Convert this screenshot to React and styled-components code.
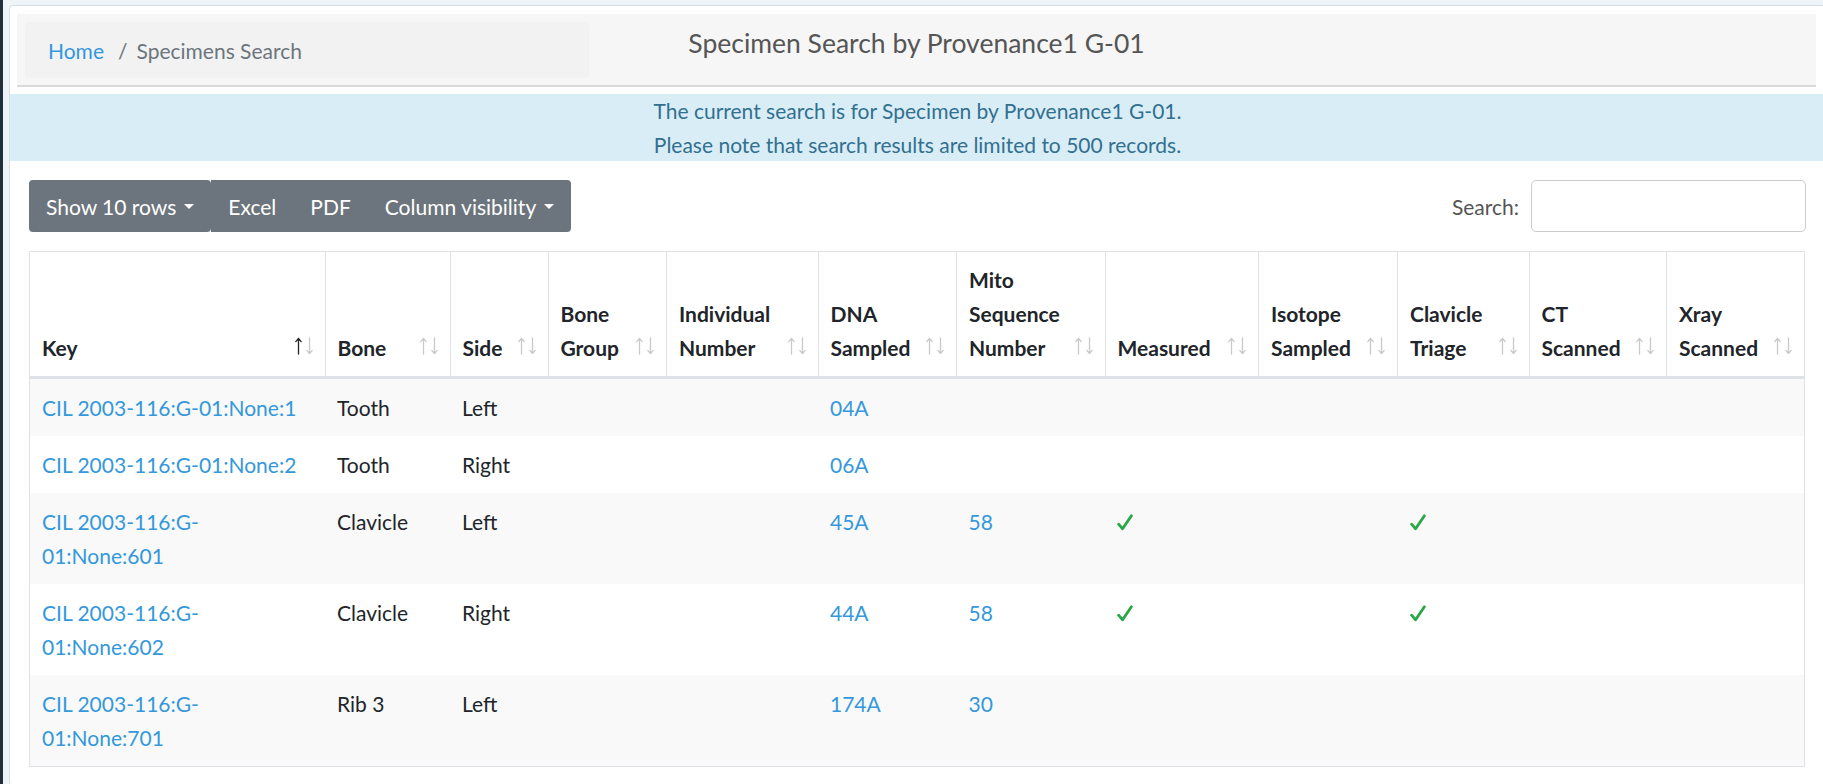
import React from 'react'
import styled, { createGlobalStyle } from 'styled-components'

const GlobalStyle = createGlobalStyle`
    html, body {
        margin: 0;
        padding: 0;
    }
    body {
        background: #eef4f8;
        font-family: Lato, 'Open Sans', sans-serif;
        font-size: 21px;
        color: #212529;
        overflow: hidden;
    }
`;

const columns = [
    { label: 'Key', width: 295.5, active: true },
    { label: 'Bone', width: 125 },
    { label: 'Side', width: 98 },
    { label: 'Bone Group', width: 118.5 },
    { label: 'Individual Number', width: 151.5 },
    { label: 'DNA Sampled', width: 138.5 },
    { label: 'Mito Sequence Number', width: 148.5 },
    { label: 'Measured', width: 153.5 },
    { label: 'Isotope Sampled', width: 139 },
    { label: 'Clavicle Triage', width: 131.5 },
    { label: 'CT Scanned', width: 137.5 },
    { label: 'Xray Scanned', width: 138 },
]

const rows = [
    { key: 'CIL 2003-116:G-01:None:1', bone: 'Tooth', side: 'Left', dna: '04A' },
    { key: 'CIL 2003-116:G-01:None:2', bone: 'Tooth', side: 'Right', dna: '06A' },
    { key: 'CIL 2003-116:G-01:None:601', bone: 'Clavicle', side: 'Left', dna: '45A', mito: '58', measured: true, clavicle: true },
    { key: 'CIL 2003-116:G-01:None:602', bone: 'Clavicle', side: 'Right', dna: '44A', mito: '58', measured: true, clavicle: true },
    { key: 'CIL 2003-116:G-01:None:701', bone: 'Rib 3', side: 'Left', dna: '174A', mito: '30' },
]

const SortIcon = ({ active }) => (
    <SortSvg width="18" height="18" viewBox="0 0 18 18">
        <g fill="none" strokeWidth="1.3" strokeLinecap="round" strokeLinejoin="round">
            <path d="M3.5 1.5V17M0.8 4.6L3.5 1.5L6.2 4.6" stroke={active ? '#222' : '#c9c9c9'} />
            <path d="M14.5 1V16.5M11.8 13.4L14.5 16.5L17.2 13.4" stroke="#c9c9c9" />
        </g>
    </SortSvg>
)

const Check = () => (
    <CheckSvg width="16" height="17" viewBox="0 0 16 17">
        <path d="M1.6 10.2L5.6 14.8L14.4 1.8" fill="none" stroke="#28a745" strokeWidth="2.8" strokeLinecap="round" strokeLinejoin="round" />
    </CheckSvg>
)

const App = () => {
    return (
        <>
            <GlobalStyle />
            <Shell>
                <SideEdge />
                <Main>
                    <Card>
                        <PageHeader>
                            <Breadcrumb>
                                <Crumb href="#">Home</Crumb>
                                <CrumbSep>/</CrumbSep>
                                <CrumbCurrent>Specimens Search</CrumbCurrent>
                            </Breadcrumb>
                            <Title>Specimen Search by Provenance1 G-01</Title>
                        </PageHeader>

                        <InfoAlert>
                            The current search is for Specimen by Provenance1 G-01.<br />
                            Please note that search results are limited to 500 records.
                        </InfoAlert>

                        <Content>
                            <Toolbar>
                                <ButtonGroup>
                                    <ToolButton $radius="4px">Show 10 rows <Caret /></ToolButton>
                                    <ToolButton $radius="0">Excel</ToolButton>
                                    <ToolButton $radius="0">PDF</ToolButton>
                                    <ToolButton $radius="0 4px 4px 0">Column visibility <Caret /></ToolButton>
                                </ButtonGroup>
                                <SearchLabel>
                                    Search:
                                    <SearchInput type="search" />
                                </SearchLabel>
                            </Toolbar>

                            <Table>
                                <colgroup>
                                    {columns.map((c) => <col key={c.label} style={{ width: c.width }} />)}
                                </colgroup>
                                <thead>
                                    <tr>
                                        {columns.map((c) => (
                                            <Th key={c.label}>
                                                <HeadInner>
                                                    <HeadLabel>{c.label}</HeadLabel>
                                                    <SortIcon active={c.active} />
                                                </HeadInner>
                                            </Th>
                                        ))}
                                    </tr>
                                </thead>
                                <tbody>
                                    {rows.map((r) => (
                                        <tr key={r.key}>
                                            <Td><CellLink href="#">{r.key}</CellLink></Td>
                                            <Td>{r.bone}</Td>
                                            <Td>{r.side}</Td>
                                            <Td></Td>
                                            <Td></Td>
                                            <Td><CellLink href="#">{r.dna}</CellLink></Td>
                                            <Td>{r.mito && <CellLink href="#">{r.mito}</CellLink>}</Td>
                                            <Td>{r.measured && <Check />}</Td>
                                            <Td></Td>
                                            <Td>{r.clavicle && <Check />}</Td>
                                            <Td></Td>
                                            <Td></Td>
                                        </tr>
                                    ))}
                                </tbody>
                            </Table>
                        </Content>
                    </Card>
                </Main>
            </Shell>
        </>
    )
}

const Shell = styled.div`
    display: flex;
    min-height: 100vh;
`;

const SideEdge = styled.div`
    width: 3px;
    flex: none;
    background: #22303c;
`;

const Main = styled.div`
    flex: 1;
    min-width: 0;
    padding: 5px 0 0 6px;
`;

const Card = styled.div`
    background: #fff;
    border: 1px solid #dadee2;
    border-radius: 4px;
    margin-right: -3px;
    min-height: calc(100vh - 5px);
`;

const PageHeader = styled.div`
    display: grid;
    grid-template-columns: 1fr auto 1fr;
    margin: 8px 9px 0 7px;
    padding: 8px 8px 7px;
    background: #f6f6f6;
    border-bottom: 2px solid #d9d9d9;
`;

const Breadcrumb = styled.nav`
    justify-self: start;
    box-sizing: border-box;
    width: 564px;
    height: 56px;
    padding: 0 23px;
    display: flex;
    align-items: center;
    background: #f2f2f2;
    border-radius: 4px;
`;

const Crumb = styled.a`
    color: #3498db;
    text-decoration: none;
`;

const CrumbSep = styled.span`
    color: #6c757d;
    padding: 0 9px 0 14px;
`;

const CrumbCurrent = styled.span`
    color: #6c757d;
`;

const Title = styled.h1`
    margin: 5px 0 0;
    font-size: 26.5px;
    line-height: 32px;
    font-weight: 400;
    color: #555;
    white-space: nowrap;
`;

const InfoAlert = styled.div`
    margin-top: 7px;
    background: #d9edf7;
    color: #31708f;
    text-align: center;
    line-height: 33.5px;
`;

const Content = styled.div`
    padding: 19px 19px 0 19px;
`;

const Toolbar = styled.div`
    display: flex;
    justify-content: space-between;
    align-items: center;
    margin-bottom: 19px;
`;

const ButtonGroup = styled.div`
    display: flex;
`;

const ToolButton = styled.button`
    display: flex;
    align-items: center;
    gap: 8px;
    height: 52px;
    padding: 0 17px;
    border: none;
    border-radius: ${(p) => p.$radius};
    background: #6c757d;
    color: #fff;
    font: inherit;
`;

const Caret = styled.span`
    width: 0;
    height: 0;
    border-top: 5px solid #fff;
    border-left: 5px solid transparent;
    border-right: 5px solid transparent;
`;

const SearchLabel = styled.label`
    display: flex;
    align-items: center;
    gap: 12px;
    color: #555;
`;

const SearchInput = styled.input`
    box-sizing: border-box;
    width: 275px;
    height: 52px;
    border: 1px solid #ccc;
    border-radius: 5px;
    font: inherit;
    padding: 0 12px;
`;

const Table = styled.table`
    width: 1775px;
    table-layout: fixed;
    border-collapse: collapse;
    border: 1px solid #dee2e6;

    tbody tr:nth-child(odd) {
        background: #f9f9f9;
    }
`;

const Th = styled.th`
    padding: 11px 12px;
    border-right: 1px solid #dee2e6;
    border-bottom: 3px solid #dee2e6;
    text-align: left;
    vertical-align: bottom;
    font-weight: 700;
    line-height: 34px;
`;

const HeadInner = styled.div`
    display: flex;
    align-items: flex-end;
    gap: 8px;
`;

const HeadLabel = styled.span`
    flex: 1;
    min-width: 0;
`;

const SortSvg = styled.svg`
    flex: none;
    margin-bottom: 10px;
`;

const Td = styled.td`
    padding: 11.5px 12px;
    line-height: 34px;
    vertical-align: top;
`;

const CellLink = styled.a`
    color: #3498db;
    text-decoration: none;
`;

const CheckSvg = styled.svg`
    display: inline-block;
    vertical-align: -1.5px;
`;

export default App;
